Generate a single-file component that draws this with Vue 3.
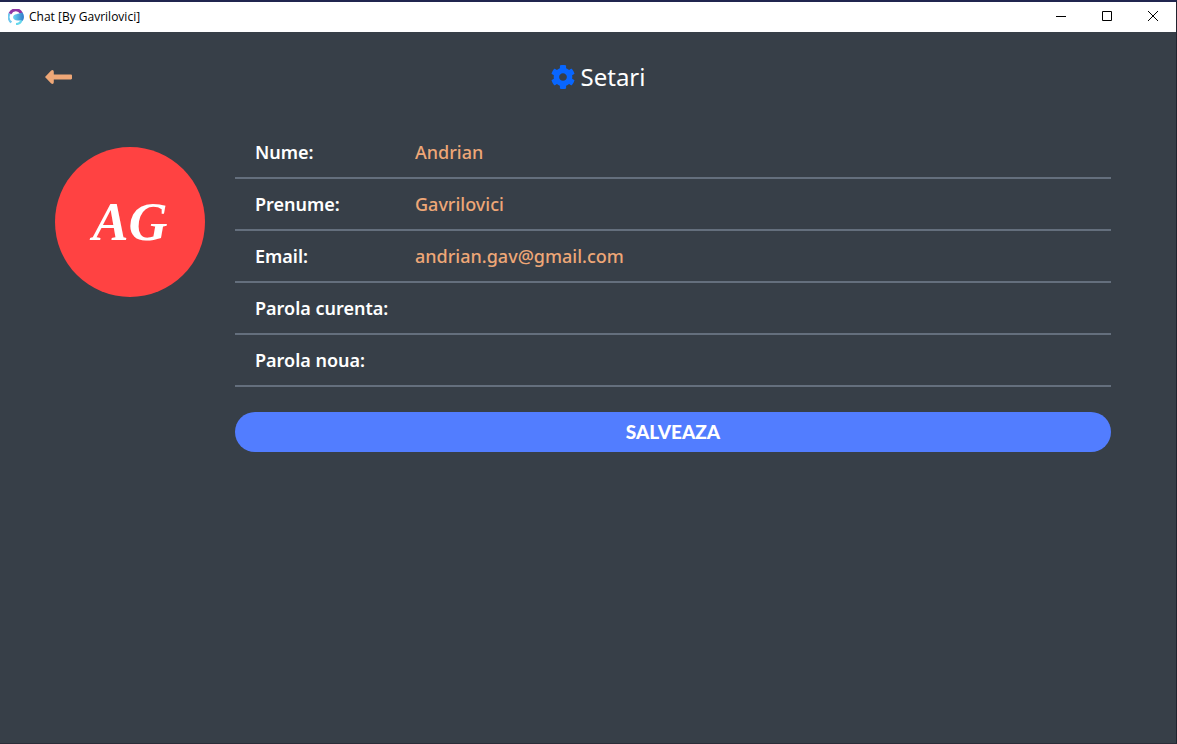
<script setup>
import { ref } from 'vue'

const fields = ref([
  { id: 'nume', label: 'Nume:', type: 'text', value: 'Andrian' },
  { id: 'prenume', label: 'Prenume:', type: 'text', value: 'Gavrilovici' },
  { id: 'email', label: 'Email:', type: 'email', value: 'andrian.gav@gmail.com' },
  { id: 'parola-curenta', label: 'Parola curenta:', type: 'password', value: '' },
  { id: 'parola-noua', label: 'Parola noua:', type: 'password', value: '' },
])
</script>

<template>
  <div class="window">
    <header class="titlebar">
      <svg class="logo" viewBox="0 0 16 16" aria-hidden="true">
        <defs>
          <linearGradient id="logo-blue" x1="0" y1="0" x2="1" y2="0">
            <stop offset="0" stop-color="#6dd5f3" />
            <stop offset="1" stop-color="#2f79c9" />
          </linearGradient>
        </defs>
        <path d="M3.4 13.4A7 7 0 0 1 1.6 4.4" fill="none" stroke="#70c8ee" stroke-width="2.2" />
        <path d="M2 4.6C4.4 -.2 11 -.6 13.4 4.4" fill="none" stroke="#8e35a5" stroke-width="3" />
        <path d="M5 8C6 4.6 10 5.6 14.4 3.6C16.6 6.4 16.4 10.4 14 12.2C12.6 11.4 11.6 11.6 9.6 11.6C7 11.4 5 10.4 5 8Z" fill="url(#logo-blue)" />
        <path d="M8 15C10.6 15 12.6 13.6 13.4 11.4" fill="none" stroke="#66d8ec" stroke-width="2.2" />
      </svg>
      <span class="caption">Chat [By Gavrilovici]</span>
      <div class="controls">
        <button type="button" aria-label="Minimize">
          <svg viewBox="0 0 10 10"><path d="M0 5.5H10" /></svg>
        </button>
        <button type="button" aria-label="Maximize">
          <svg viewBox="0 0 10 10"><path d="M.5 .5H9.5V9.5H.5Z" /></svg>
        </button>
        <button type="button" aria-label="Close">
          <svg viewBox="0 0 10 10"><path d="M0 0L10 10M10 0L0 10" /></svg>
        </button>
      </div>
    </header>

    <main class="page">
      <div class="heading">
        <button class="back" type="button" aria-label="Inapoi">
          <svg viewBox="0 0 27 14">
            <path d="M0 7L6.2 .6Q8.6 -.8 8.8 1.8V4.6H26Q27 4.6 27 5.4V8.6Q27 9.4 26 9.4H8.8V12.2Q8.6 14.8 6.2 13.4Z" />
          </svg>
        </button>
        <h1>
          <svg class="gear" viewBox="16 8 480 496" aria-hidden="true">
            <path d="M487.4 315.7l-42.6-24.6c4.3-23.2 4.3-47 0-70.2l42.6-24.6c4.9-2.8 7.1-8.6 5.5-14-11.1-35.6-30-67.8-54.7-94.6-3.8-4.1-10-5.1-14.8-2.3L380.8 110c-17.9-15.4-38.5-27.3-60.8-35.1V25.8c0-5.6-3.9-10.5-9.4-11.7-36.7-8.2-74.3-7.8-109.2 0-5.5 1.2-9.4 6.1-9.4 11.7V75c-22.2 7.9-42.8 19.8-60.8 35.1L88.7 85.5c-4.9-2.8-11-1.9-14.8 2.3-24.7 26.7-43.6 58.9-54.7 94.6-1.7 5.4.6 11.2 5.5 14L67.3 221c-4.3 23.2-4.3 47 0 70.2l-42.6 24.6c-4.9 2.8-7.1 8.6-5.5 14 11.1 35.6 30 67.8 54.7 94.6 3.8 4.1 10 5.1 14.8 2.3l42.6-24.6c17.9 15.4 38.5 27.3 60.8 35.1v49.2c0 5.6 3.9 10.5 9.4 11.7 36.7 8.2 74.3 7.8 109.2 0 5.5-1.2 9.4-6.1 9.4-11.7v-49.2c22.2-7.9 42.8-19.8 60.8-35.1l42.6 24.6c4.9 2.8 11 1.9 14.8-2.3 24.7-26.7 43.6-58.9 54.7-94.6 1.5-5.5-.7-11.3-5.6-14.1zM256 336c-44.1 0-80-35.9-80-80s35.9-80 80-80 80 35.9 80 80-35.9 80-80 80z" />
          </svg>
          Setari
        </h1>
      </div>

      <div class="profile">
        <div class="avatar">AG</div>
        <form class="form" @submit.prevent>
          <div v-for="field in fields" :key="field.id" class="row">
            <label :for="field.id">{{ field.label }}</label>
            <input :id="field.id" v-model="field.value" :type="field.type" />
          </div>
          <button class="save" type="submit">SALVEAZA</button>
        </form>
      </div>
    </main>
  </div>
</template>

<style>
body {
  margin: 0;
  background: #373f48;
}
</style>

<style scoped>
.window {
  box-sizing: border-box;
  min-height: 100vh;
  display: flex;
  flex-direction: column;
  border-top: 2px solid #20254f;
  border-right: 1px solid #20242f;
  border-bottom: 1px solid #2b2d38;
  background: #373f48;
  color: #fff;
  font-family: "Noto Sans", "Open Sans", sans-serif;
}

.titlebar {
  display: flex;
  align-items: center;
  height: 30px;
  padding-left: 8px;
  background: #fff;
  color: #000;
}

.logo {
  width: 16px;
  height: 16px;
  margin-right: 5px;
}

.caption {
  font-family: "Open Sans", sans-serif;
  font-size: 12px;
  line-height: 16px;
}

.controls {
  display: flex;
  align-self: stretch;
  margin-left: auto;
}

.controls button {
  display: flex;
  align-items: center;
  justify-content: center;
  width: 46px;
  padding: 0 0 2px;
  border: 0;
  background: none;
}

.controls svg {
  width: 10px;
  height: 10px;
  fill: none;
  stroke: #000;
}

.page {
  padding: 25px 65px 40px 45px;
}

.heading {
  display: grid;
  grid-template-columns: 40px 1fr;
  align-items: center;
  height: 40px;
}

.back {
  display: flex;
  padding: 0;
  border: 0;
  background: none;
}

.back svg {
  width: 27px;
  height: 14px;
  fill: #eea777;
}

h1 {
  display: flex;
  align-items: center;
  justify-content: center;
  gap: 6px;
  margin: 0;
  font-size: 24px;
  font-weight: 400;
  line-height: 32px;
}

.gear {
  width: 24px;
  height: 24px;
  fill: #0866ff;
}

.profile {
  display: flex;
  align-items: flex-start;
  gap: 30px;
  padding: 30px 0 0 10px;
}

.avatar {
  flex: none;
  display: flex;
  align-items: center;
  justify-content: center;
  width: 150px;
  height: 150px;
  margin-top: 20px;
  border-radius: 50%;
  background: #ff4242;
  font: italic 700 54px/60px "Liberation Serif", serif;
}

.form {
  flex: 1;
  min-width: 0;
}

.row {
  display: flex;
  align-items: center;
  height: 50px;
  padding-left: 20px;
  border-bottom: 2px solid #646f7d;
  font-size: 18px;
  font-weight: 600;
}

.row label {
  flex: none;
  width: 160px;
}

.row input {
  flex: 1;
  min-width: 0;
  height: 40px;
  padding: 0;
  border: 0;
  outline: 0;
  background: none;
  color: #eea777;
  font: inherit;
  font-weight: 500;
}

.save {
  width: 100%;
  height: 40px;
  margin-top: 25px;
  padding: 0;
  border: 0;
  border-radius: 20px;
  background: #527dff;
  color: #fff;
  font: 900 19px/24px Lato, sans-serif;
}
</style>
